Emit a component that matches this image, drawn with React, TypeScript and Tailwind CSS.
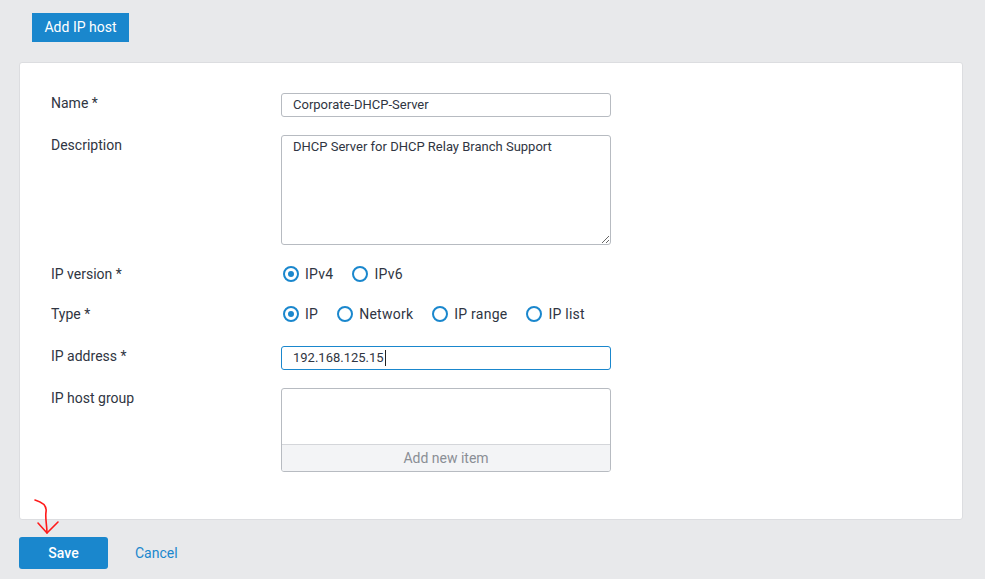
import React from "react";

const font = { fontFamily: "Roboto, 'Noto Sans', sans-serif" };

function Radio({ label, checked }: { label: string; checked?: boolean }) {
  return (
    <label className="mr-[19px] flex items-center gap-[6px]">
      <span className="flex h-[16px] w-[16px] items-center justify-center rounded-full border-2 border-[#1a87cd] bg-white">
        {checked && <span className="h-[6px] w-[6px] rounded-full bg-[#1a87cd]" />}
      </span>
      <span className="text-[14px] tracking-[0.25px] text-[#2f3542]">{label}</span>
    </label>
  );
}

function Label({ children }: { children: React.ReactNode }) {
  return <div className="w-[230px] shrink-0 text-[14px] leading-[20px] text-[#2f3542]">{children}</div>;
}

export default function App() {
  return (
    <div className="relative h-[579px] w-[985px] overflow-hidden bg-[#e8e9eb]" style={font}>
      <div className="flex pl-[32px] pt-[13px]">
        <button className="h-[29px] w-[97px] bg-[#1a87cd] text-[14px] text-white">Add IP host</button>
      </div>

      <div className="ml-[19px] mt-[20px] h-[458px] w-[944px] rounded-[3px] border border-[#dcdde0] bg-white px-[31px] pt-[30px]">
        <div className="flex">
          <Label>Name *</Label>
          <div className="flex h-[24px] w-[330px] items-center rounded-[3px] border border-[#b7bbc1] px-[11px] text-[13px] text-[#2f3542]">
            Corporate-DHCP-Server
          </div>
        </div>

        <div className="mt-[18px] flex">
          <Label>Description</Label>
          <textarea
            className="h-[110px] w-[330px] rounded-[3px] border border-[#b7bbc1] px-[11px] py-[1px] text-[13px] text-[#2f3542] outline-none"
            defaultValue="DHCP Server for DHCP Relay Branch Support"
            style={font}
          />
        </div>

        <div className="mt-[19px] flex">
          <Label>IP version *</Label>
          <div className="flex h-[20px] items-center pl-[2px]">
            <Radio label="IPv4" checked />
            <Radio label="IPv6" />
          </div>
        </div>

        <div className="mt-[20px] flex">
          <Label>Type *</Label>
          <div className="flex h-[20px] items-center pl-[2px]">
            <Radio label="IP" checked />
            <Radio label="Network" />
            <Radio label="IP range" />
            <Radio label="IP list" />
          </div>
        </div>

        <div className="mt-[22px] flex">
          <Label>IP address *</Label>
          <div className="flex h-[24px] w-[330px] items-center rounded-[3px] border border-[#1a87cd] px-[11px] text-[13px] text-[#2f3542]">
            192.168.125.15
            <span className="ml-[1px] h-[16px] w-[1px] bg-[#222]" />
          </div>
        </div>

        <div className="mt-[18px] flex">
          <Label>IP host group</Label>
          <div className="flex h-[84px] w-[330px] flex-col overflow-hidden rounded-[3px] border border-[#b7bbc1]">
            <div className="flex-1" />
            <div className="flex h-[27px] items-center justify-center border-t border-[#d4d6da] bg-[#f3f4f6] text-[14px] text-[#8a8e95]">
              Add new item
            </div>
          </div>
        </div>
      </div>

      <div className="ml-[19px] mt-[17px] flex items-center">
        <button className="h-[32px] w-[89px] rounded-[3px] bg-[#1a87cd] text-[14px] font-medium text-white">Save</button>
        <span className="ml-[27px] text-[14px] text-[#1a87cd]">Cancel</span>
      </div>

      <svg className="absolute left-[30px] top-[496px]" width="34" height="40" viewBox="0 0 34 40" fill="none">
        <path
          d="M5 4 C 12 6, 17 10, 16 16 C 15 22, 17 30, 17 37"
          stroke="#ff1a1a"
          strokeWidth="1.6"
          strokeLinecap="round"
        />
        <path d="M8 27 L17 37 L28 26" stroke="#ff1a1a" strokeWidth="1.6" strokeLinecap="round" strokeLinejoin="round" />
      </svg>
    </div>
  );
}
